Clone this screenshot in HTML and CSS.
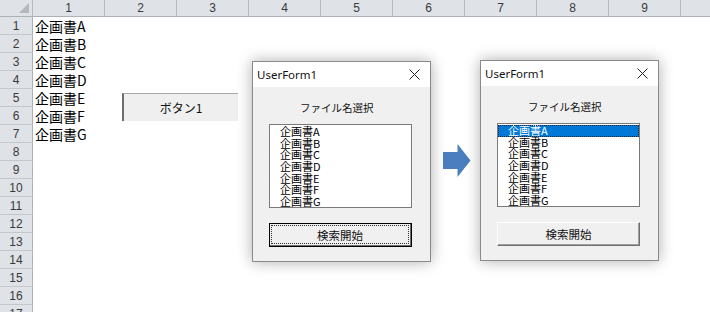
FILE: index.html
```html
<!DOCTYPE html>
<html lang="ja">
<head>
<meta charset="utf-8">
<link rel="stylesheet" href="styles.css">
</head>
<body>
<div class="sheet">
  <div class="hrow">
    <div class="corner"></div>
    <div class="ch">1</div><div class="ch">2</div><div class="ch">3</div><div class="ch">4</div><div class="ch">5</div>
    <div class="ch">6</div><div class="ch">7</div><div class="ch">8</div><div class="ch">9</div><div class="ch">10</div>
  </div>
  <div class="row"><div class="rh">1</div><div class="cell">企画書A</div></div>
  <div class="row"><div class="rh">2</div><div class="cell">企画書B</div></div>
  <div class="row"><div class="rh">3</div><div class="cell">企画書C</div></div>
  <div class="row"><div class="rh">4</div><div class="cell">企画書D</div></div>
  <div class="row"><div class="rh">5</div><div class="cell">企画書E</div></div>
  <div class="row"><div class="rh">6</div><div class="cell">企画書F</div></div>
  <div class="row"><div class="rh">7</div><div class="cell">企画書G</div></div>
  <div class="row"><div class="rh">8</div><div class="cell"></div></div>
  <div class="row"><div class="rh">9</div><div class="cell"></div></div>
  <div class="row"><div class="rh">10</div><div class="cell"></div></div>
  <div class="row"><div class="rh">11</div><div class="cell"></div></div>
  <div class="row"><div class="rh">12</div><div class="cell"></div></div>
  <div class="row"><div class="rh">13</div><div class="cell"></div></div>
  <div class="row"><div class="rh">14</div><div class="cell"></div></div>
  <div class="row"><div class="rh">15</div><div class="cell"></div></div>
  <div class="row"><div class="rh">16</div><div class="cell"></div></div>
  <div class="row"><div class="rh">17</div><div class="cell"></div></div>
</div>

<div class="xlbtn">ボタン1</div>

<div class="form form-left">
  <div class="titlebar">
    <span class="title">UserForm1</span>
    <svg class="close" width="11" height="11" viewBox="0 0 11 11"><path d="M0.5 0.5 L10.5 10.5 M10.5 0.5 L0.5 10.5" stroke="#222" stroke-width="1" fill="none"/></svg>
  </div>
  <div class="fbody">
    <div class="label">ファイル名選択</div>
    <div class="listbox">
      <div class="item">企画書A</div>
      <div class="item">企画書B</div>
      <div class="item">企画書C</div>
      <div class="item">企画書D</div>
      <div class="item">企画書E</div>
      <div class="item">企画書F</div>
      <div class="item">企画書G</div>
    </div>
    <div class="cmd cmd-focus"><span class="cmd-inner">検索開始</span></div>
  </div>
</div>

<svg class="arrow" width="28" height="34" viewBox="0 0 28 34"><polygon points="0,8 14.5,8 14.5,0 27.5,16.5 14.5,33 14.5,25 0,25" fill="#4a7ebf"/></svg>

<div class="form form-right">
  <div class="titlebar">
    <span class="title">UserForm1</span>
    <svg class="close" width="11" height="11" viewBox="0 0 11 11"><path d="M0.5 0.5 L10.5 10.5 M10.5 0.5 L0.5 10.5" stroke="#222" stroke-width="1" fill="none"/></svg>
  </div>
  <div class="fbody">
    <div class="label">ファイル名選択</div>
    <div class="listbox">
      <div class="item selected">企画書A</div>
      <div class="item">企画書B</div>
      <div class="item">企画書C</div>
      <div class="item">企画書D</div>
      <div class="item">企画書E</div>
      <div class="item">企画書F</div>
      <div class="item">企画書G</div>
    </div>
    <div class="cmd cmd-plain"><span class="cmd-inner">検索開始</span></div>
  </div>
</div>
</body>
</html>
```

FILE: styles.css
```css
html, body {
  margin: 0;
  padding: 0;
  background: #ffffff;
  overflow: hidden;
  width: 710px;
  height: 312px;
}
body {
  position: relative;
  font-family: "Noto Sans CJK JP", "Liberation Sans", sans-serif;
}
.sheet {
  display: flex;
  flex-direction: column;
}
.hrow {
  display: flex;
  height: 17px;
  background: #dfe2e6;
  border-bottom: 1px solid #acb1b7;
  box-sizing: border-box;
}
.corner {
  width: 33px;
  flex: none;
  box-sizing: border-box;
  border-right: 1px solid #b8bcc2;
  display: flex;
  justify-content: flex-end;
  align-items: flex-end;
  padding: 0 3px 3px 0;
}
.corner::after {
  content: "";
  width: 10px;
  height: 10px;
  background: #b4b8be;
  clip-path: polygon(100% 0, 100% 100%, 0 100%);
}
.ch {
  width: 72px;
  flex: none;
  box-sizing: border-box;
  border-right: 1px solid #b8bcc2;
  text-align: center;
  font-family: "Liberation Sans", sans-serif;
  font-size: 12px;
  line-height: 16px;
  color: #3a3a3a;
}
.row {
  display: flex;
  height: 18px;
}
.rh {
  width: 33px;
  flex: none;
  box-sizing: border-box;
  background: #dfe2e6;
  border-right: 1px solid #acb1b7;
  border-bottom: 1px solid #c3c7cc;
  text-align: center;
  font-family: "Liberation Sans", sans-serif;
  font-size: 12px;
  line-height: 18px;
  color: #3a3a3a;
}
.cell {
  padding-left: 2px;
  font-size: 14px;
  line-height: 18px;
  color: #000;
  white-space: nowrap;
}

/* Excel form button */
.xlbtn {
  position: absolute;
  left: 122px;
  top: 93px;
  width: 116px;
  height: 28px;
  box-sizing: border-box;
  background: #efefef;
  border-left: 2px solid #6e6e6e;
  border-top: 1px solid #a8a8a8;
  display: flex;
  align-items: center;
  justify-content: center;
  font-size: 12px;
  color: #111;
  padding-bottom: 1px;
}

/* UserForm windows */
.form {
  position: absolute;
  width: 179px;
  height: 201px;
  box-sizing: border-box;
  border: 1px solid #8a8a8a;
  background: #f0f0f0;
  box-shadow: 0 0 14px rgba(0, 0, 0, 0.32);
  display: flex;
  flex-direction: column;
}
.form-left { left: 252px; top: 61px; }
.form-right { left: 480px; top: 60px; }
.titlebar {
  height: 25px;
  flex: none;
  background: #ffffff;
  display: flex;
  align-items: center;
  justify-content: space-between;
  padding: 0 10px 0 4px;
}
.title {
  font-family: "Noto Sans", "Liberation Sans", sans-serif;
  font-size: 11.5px;
  color: #111;
}
.close { display: block; }
.fbody {
  display: flex;
  flex-direction: column;
  padding: 14px 18px 0 16px;
}
.label {
  height: 14px;
  padding-left: 31px;
  font-size: 10.5px;
  line-height: 14px;
  color: #111;
  white-space: nowrap;
}
.listbox {
  margin-top: 9px;
  height: 84px;
  box-sizing: border-box;
  border: 1px solid #7a7a7a;
  background: #ffffff;
  padding-top: 1px;
  display: flex;
  flex-direction: column;
}
.item {
  height: 11.7px;
  padding-left: 10px;
  font-size: 11px;
  line-height: 11.7px;
  color: #000;
  white-space: nowrap;
  box-sizing: border-box;
}
.item.selected {
  background: #0078d7;
  color: #ffffff;
  outline: 1px dotted #222;
  outline-offset: -1px;
}
.cmd {
  margin-top: 15px;
  height: 24px;
  box-sizing: border-box;
  background: #f0f0f0;
  display: flex;
  font-size: 11.5px;
  color: #111;
}
.cmd-inner {
  flex: 1;
  display: flex;
  align-items: center;
  justify-content: center;
}
.cmd-focus {
  border: 1px solid #000;
  padding: 1px 2px 2px 1px;
  box-shadow: inset -1px -1px 0 #6f6f6f;
}
.cmd-focus .cmd-inner {
  border: 1px dotted #333;
}
.cmd-plain {
  border-top: 1px solid #fdfdfd;
  border-left: 1px solid #fdfdfd;
  border-right: 1px solid #6f6f6f;
  border-bottom: 1px solid #6f6f6f;
  box-shadow: inset -1px -1px 0 #a0a0a0;
}

.arrow {
  position: absolute;
  left: 443px;
  top: 144px;
}
```
